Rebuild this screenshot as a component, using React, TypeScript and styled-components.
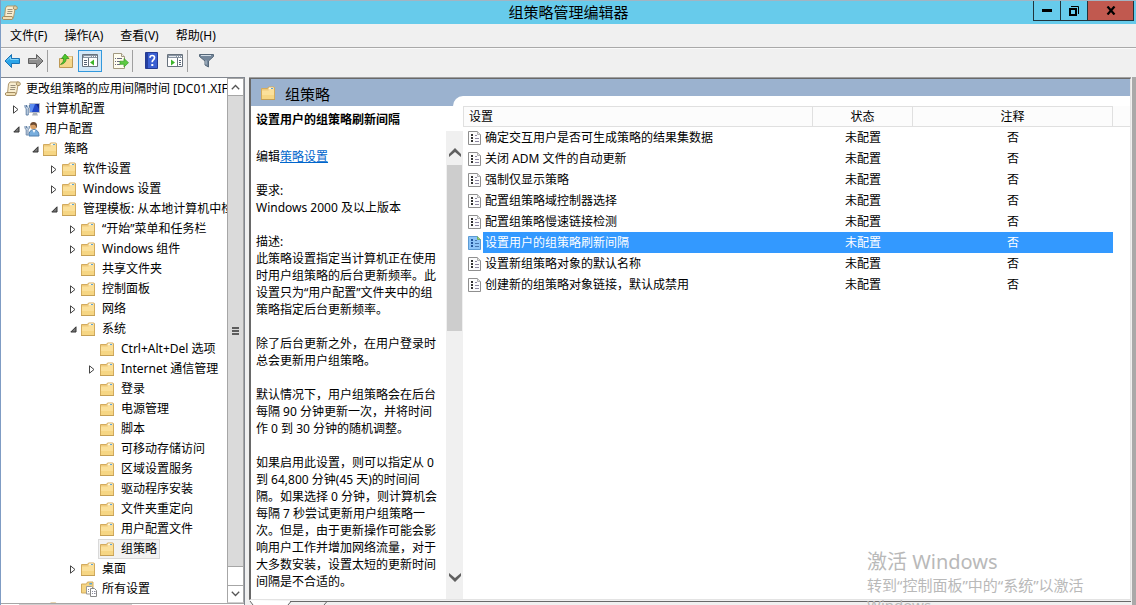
import React from "react";
import styled, { createGlobalStyle, css } from "styled-components";

const Global = createGlobalStyle`
  * { box-sizing: border-box; }
  body { margin: 0; overflow: hidden; }
  button { font: inherit; color: inherit; padding: 0; margin: 0; border: 0; background: none; }
  svg { display: block; flex: none; }
  p, h1, h2 { margin: 0; font-weight: normal; }
`;

const Window = styled.div`
  position: relative;
  display: flex;
  flex-direction: column;
  height: 100vh;
  overflow: hidden;
  border-left: 1px solid #7f9cc4;
  background: #f0f0f0;
  color: #000;
  font: 12px/20px "Noto Sans", "Noto Sans CJK SC", sans-serif;
`;

/* ---------- title bar ---------- */

const TitleBar = styled.header`
  flex: none;
  display: grid;
  grid-template-columns: 1fr auto 1fr;
  align-items: start;
  height: 24px;
  border-top: 1px solid #a3b4c2;
  background: #67cbeb;
`;

const TitleIcon = styled.div`
  padding: 4px 0 0 1px;
`;

const WindowTitle = styled.h1`
  font-size: 15px;
  line-height: 22px;
`;

const Captions = styled.div`
  display: flex;
  justify-content: flex-end;
  padding-right: 2px;
`;

const CaptionButton = styled.button<{ $close?: boolean }>`
  display: flex;
  align-items: center;
  justify-content: center;
  width: ${(p) => (p.$close ? 47 : 28)}px;
  height: 20px;
  border: 1px solid #20343c;
  border-top: 0;
  margin-left: -1px;
  background: ${(p) => (p.$close ? "#c1594f" : "transparent")};
`;

/* ---------- menu and toolbar ---------- */

const MenuBar = styled.nav`
  flex: none;
  display: flex;
  gap: 1px;
  height: 24px;
  padding-left: 1px;
  border-bottom: 1px solid #a9a9a9;
`;

const MenuItem = styled.button`
  padding: 0 8px;
  line-height: 22px;
`;

const Toolbar = styled.div`
  flex: none;
  display: flex;
  align-items: center;
  height: 29px;
  padding-bottom: 5px;
  border-top: 1px solid #fafafa;
`;

const ToolButton = styled.button<{ $on?: boolean }>`
  display: flex;
  align-items: center;
  justify-content: center;
  width: 24px;
  height: 22px;
  ${(p) =>
    p.$on &&
    css`
      border: 1px solid #3399dd;
      background: #d3e8f8;
    `}
`;

const ToolGroup = styled.div`
  display: flex;
  align-items: center;
  padding-left: 6px;
  & + & {
    border-left: 1px solid #a0a0a0;
  }
  &:first-child {
    padding-left: 0;
  }
  &:first-child ${ToolButton} {
    width: 23px;
  }
`;

const ToolGap = styled.span`
  width: 6px;
`;

/* ---------- body ---------- */

const Body = styled.main`
  flex: 1;
  min-height: 0;
  display: flex;
`;

const TreePane = styled.section`
  flex: none;
  display: flex;
  flex-direction: column;
  width: 244px;
  border-top: 1px solid #82878f;
  border-right: 1px solid #82878f;
  background: #fff;
`;

const TreeArea = styled.div`
  flex: 1;
  min-height: 0;
  display: flex;
`;

const TreeList = styled.ul`
  flex: 1;
  min-width: 0;
  margin: 0;
  padding: 1px 0 0;
  overflow: hidden;
  list-style: none;
`;

const TreeRow = styled.li<{ $level: number }>`
  display: flex;
  align-items: center;
  height: 20px;
  padding-left: ${(p) => (p.$level ? p.$level * 19 - 10 : 2)}px;
  white-space: nowrap;
`;

const Expander = styled.span`
  flex: none;
  display: flex;
  justify-content: center;
  width: 12px;
`;

const TreeLabel = styled.span<{ $selected?: boolean }>`
  display: flex;
  align-items: center;
  gap: 5px;
  height: 20px;
  padding: 0 2px 0 1px;
  line-height: 18px;
  border: 1px solid ${(p) => (p.$selected ? "#d9d9d9" : "transparent")};
  background: ${(p) => (p.$selected ? "#f2f2f2" : "transparent")};
`;

const IconBox = styled.span`
  flex: none;
  display: flex;
  width: 16px;
`;

const ScrollTrack = styled.div`
  flex: none;
  display: flex;
  flex-direction: column;
  width: 17px;
  border: 1px solid #a6a6a6;
  border-bottom-color: #cfcfcf;
`;

const ScrollButton = styled.button`
  flex: none;
  display: flex;
  align-items: center;
  justify-content: center;
  height: 17px;
  border-bottom: 1px solid #a6a6a6;
`;

const ScrollThumb = styled.div`
  flex: 1;
  display: flex;
  align-items: center;
  justify-content: center;
  margin-bottom: 18px;
  border-bottom: 1px solid #a6a6a6;
  background: #dadada;
`;

const LastScrollButton = styled(ScrollButton)`
  border-top: 1px solid #a6a6a6;
  border-bottom: 0;
`;

const HorizontalTrack = styled.div`
  flex: none;
  height: 2px;
  padding-left: 18px;
  border-top: 1px solid #a6a6a6;
`;

const HorizontalThumb = styled.div`
  width: 50%;
  height: 1px;
  background: #cdcdcd;
`;

const DetailPane = styled.section`
  flex: 1;
  min-width: 0;
  display: flex;
  flex-direction: column;
  margin-left: 4px;
  border-top: 1px solid #a0a0a0;
`;

const DetailFrame = styled.div`
  flex: 1;
  min-height: 0;
  display: flex;
  border: 1px solid #696969;
  border-left-width: 2px;
  border-right-color: #e3e3e3;
  border-bottom-color: #e3e3e3;
  background: #fff;
`;

const RightEdge = styled.div`
  flex: none;
  width: 4px;
  margin-left: 1px;
  background: #a9a9a9;
`;

const InfoColumn = styled.div`
  flex: none;
  display: flex;
  flex-direction: column;
  width: 212px;
`;

const Banner = styled.div`
  position: relative;
  flex: none;
  display: flex;
  align-items: center;
  gap: 10px;
  height: 27px;
  padding: 0 0 0 10px;
  background: #9bb2cf;
`;

const BannerCurve = styled.span`
  position: absolute;
  right: 0;
  bottom: 0;
  width: 10px;
  height: 10px;
  border-top-left-radius: 10px;
  background: #fff;
`;

const BannerTitle = styled.h2`
  font-size: 15px;
  line-height: 20px;
  padding-top: 2px;
`;

const PolicyName = styled.h2`
  flex: none;
  height: 25px;
  padding: 5px 0 0 5px;
  font-size: 12px;
  font-weight: bold;
  line-height: 17px;
`;

const InfoScroll = styled.div`
  flex: 1;
  min-height: 0;
  display: flex;
`;

const InfoText = styled.div`
  flex: 1;
  min-width: 0;
  display: flex;
  flex-direction: column;
  gap: 17px;
  padding: 17px 0 0 5px;
  line-height: 17px;
  white-space: pre;
  a {
    color: #0066cc;
  }
`;

const InfoTrack = styled.div`
  flex: none;
  width: 17px;
  display: flex;
  flex-direction: column;
  padding-bottom: 9px;
  background: #f0f0f0;
`;

const InfoArrow = styled.button`
  flex: none;
  display: flex;
  align-items: center;
  justify-content: center;
  height: 34px;
  padding-top: 8px;
`;

const InfoThumb = styled.div`
  flex: 166;
  margin: 0 1px 0 1px;
  background: #cdcdcd;
`;

const TrackSpace = styled.div`
  flex: 226;
`;

const ListColumn = styled.div`
  flex: 1;
  min-width: 0;
`;

const ListBand = styled.div`
  height: 17px;
  margin-bottom: 10px;
  background: #9bb2cf;
`;

const PolicyTable = styled.table`
  width: 100%;
  table-layout: fixed;
  border-collapse: separate;
  border-spacing: 0;
  line-height: 21px;
`;

const NameCol = styled.col``;
const StateCol = styled.col`
  width: 100px;
`;
const NoteCol = styled.col`
  width: 200px;
`;
const RestCol = styled.col`
  width: 17px;
`;

const HeadCell = styled.th<{ $left?: boolean; $rest?: boolean }>`
  height: 21px;
  padding: 0 0 0 ${(p) => (p.$left ? 5 : 0)}px;
  border: 1px solid #e0e0e0;
  border-left-width: ${(p) => (p.$left ? 1 : 0)}px;
  ${(p) => p.$rest && "border-top-color: transparent; border-right: 0;"}
  background: #fcfcfc;
  font-weight: normal;
  line-height: 19px;
  text-align: ${(p) => (p.$left ? "left" : "center")};
`;

const Cell = styled.td<{ $selected: boolean }>`
  height: 21px;
  padding: 0;
  text-align: center;
  background: ${(p) => (p.$selected ? "#3399ff" : "transparent")};
  color: ${(p) => (p.$selected ? "#fff" : "#000")};
`;

const NameCell = styled.td`
  height: 21px;
  padding: 0;
`;

const NameInner = styled.div`
  display: flex;
  align-items: center;
  padding-left: 5px;
`;

const PolicyLabel = styled.span<{ $selected: boolean }>`
  flex: 1;
  height: 21px;
  padding-left: 2px;
  margin-left: 1px;
  line-height: 22px;
  background: ${(p) => (p.$selected ? "#3399ff" : "transparent")};
  color: ${(p) => (p.$selected ? "#fff" : "#000")};
`;

const TabStrip = styled.div`
  flex: none;
  height: 5px;
  overflow: hidden;
`;

const Watermark = styled.div`
  position: absolute;
  right: 49px;
  bottom: -10px;
  width: 220px;
  color: #b9b9b9;
  font-size: 15px;
  line-height: 20px;
  white-space: nowrap;
  pointer-events: none;
`;

const WatermarkTitle = styled.p`
  font-size: 20px;
  line-height: 26px;
`;

/* ---------- icons ---------- */

const Scroll = () => (
  <svg width="16" height="16" viewBox="0 0 16 16">
    <path d="M5 1h8.500l-2 11.500H2.500L3.500 3z" fill="#f8edcf" stroke="#b09a70" />
    <path d="M12.500 1c-1.500 0-1.500 3.500 0 3.500h1.700c1.500 0 1.500-3.500-.5-3.500z" fill="#e2cfa2" stroke="#a48d62" />
    <path d="M1.500 11.500h8.500c1.200 0 1.200 3 0 3h-8.500c-1.500 0-1.500-3 0-3z" fill="#f0dfb5" stroke="#a48d62" />
    <path d="M5.500 4.500h5M5.500 6.500h5M5 8.500h5" stroke="#9a907c" />
  </svg>
);

const Folder = () => (
  <svg width="14" height="16" viewBox="0 0 14 16">
    <path d="M.5 3.500h6l1-1.500h5q1 0 1 1v11.500H.5z" fill="#efca7c" stroke="#d2ab5e" />
    <path d="M8 2.500h4.500v2H7.500z" fill="#fff8df" />
    <path d="M10 3h2v1h-2z" fill="#59a5d8" />
    <path d="M1 5.500h6.500l1-1H13V14H1z" fill="#fbe09a" />
    <path d="M1 10h12v4H1z" fill="#f6d684" />
    <path d="M0 14.500h14" stroke="#c5a056" />
  </svg>
);

const Computer = () => (
  <svg width="16" height="16" viewBox="0 0 16 16">
    <path d="M5.500 2.500h10v9h-10z" fill="#2147c9" stroke="#b9bec9" />
    <path d="M6 3h5l-3 8H6z" fill="#5d8df0" />
    <path d="M12 3h3v5z" fill="#12288f" />
    <path d="M9 12h4l1 2.500H8z" fill="#aab0b8" />
    <path d="M1 4v2.500l1.200 1V14h2V7.500l1.300-1V4M2.500 4v2h1.500" fill="#dfe9f3" stroke="#5b7ba3" />
  </svg>
);

const Person = () => (
  <svg width="16" height="16" viewBox="0 0 16 16">
    <path d="M5 15q-.5-6 5-6.500Q15 9 15 15z" fill="#78aede" stroke="#4f7fae" />
    <path d="M8.500 9h3L10 12z" fill="#fff" />
    <circle cx="9.500" cy="5" r="3.300" fill="#d9a066" />
    <path d="M6.300 4.500Q6 1 9.500 1T13 5l-.5 2.500Q12 4 10 3.800T6.300 4.500z" fill="#6d4b31" />
    <path d="M1 5v2.500l1.200 1V14h1.800V8.500l1.300-1V5M2.500 5v2H4" fill="#dfe9f3" stroke="#6a86a8" />
  </svg>
);

const AllSettings = () => (
  <svg width="17" height="16" viewBox="0 0 17 16">
    <path d="M.5 3h5l1-2h5.500v11H.5z" fill="#f5d584" stroke="#d2ab5e" />
    <path d="M8.500 2h2.500v1.500H8z" fill="#59a5d8" />
    <path d="M5.500 5.500h5l1.500 1.500v6H5.500z" fill="#fff" stroke="#999" />
    <path d="M9.500 7.500h4l2 2v6h-6z" fill="#fff" stroke="#888" />
    <path d="M11 10.500h1m1 0h1.500M11 12.500h1m1 0h1.500M7 8.500h1M7 10.500h1" stroke="#8a8a9c" />
  </svg>
);

const Closed = () => (
  <svg width="6" height="9" viewBox="0 0 6 9">
    <path d="M.5.8v7.400L5 4.500z" fill="#fff" stroke="#444" />
  </svg>
);

const Open = () => (
  <svg width="7" height="7" viewBox="0 0 7 7">
    <path d="M6 .8V6H.8z" fill="#777" stroke="#333" />
  </svg>
);

const PolicyIcon = ({ active }: { active: boolean }) => (
  <svg width="14" height="16" viewBox="0 0 14 16">
    <path d="M.5 1.500h9l3 3v10H.5z" fill={active ? "#8cc4f8" : "#fcfcfc"} stroke={active ? "#5b9bd5" : "#8f8f8f"} />
    <path d="M9.500 1.500v3h3" fill={active ? "#b4d957" : "#e2e2e2"} stroke={active ? "#6fae6d" : "#b1b1b1"} />
    <path d="M3 4h2v2H3zM3 7h2v2H3zM3 10h2v2H3z" fill={active ? "#22569b" : "#333"} />
    <path d="M7 5.500h2M7 8.500h4M7 11.500h4" stroke={active ? "#4777b0" : "#8c86a0"} />
  </svg>
);

const Arrow = ({ forward }: { forward?: boolean }) => (
  <svg width="17" height="16" viewBox="0 0 17 16">
    <path
      d={forward ? "M16 8 9.500 1.500v4h-8v5h8v4z" : "M1 8l6.500-6.500v4h8v5h-8v4z"}
      fill={forward ? "#8e8e8e" : "#2ca5e8"}
      stroke={forward ? "#606060" : "#1973b5"}
    />
    <path d={forward ? "M2.500 6.500h8V4l3.500 3.500" : "M3 7.500 6.500 4v2.500h8"} fill="none" stroke={forward ? "#b8b8b8" : "#83d5fa"} />
  </svg>
);

const UpFolder = () => (
  <svg width="16" height="16" viewBox="0 0 16 16">
    <path d="M1.500 5.500h6l1.500-2h5.500v11h-13z" fill="#f4d68b" stroke="#bd9954" />
    <path d="M10 3.500h4V6H9z" fill="#ffe9af" />
    <path d="M2.500 11.500Q8 10.500 8.200 5.500H11L7 1 3.500 5.500h2.200Q6 9 2.500 11.500z" fill="#4fc92b" stroke="#29871a" strokeWidth=".7" />
  </svg>
);

const Panel = ({ right }: { right?: boolean }) => (
  <svg width="17" height="15" viewBox="0 0 17 15">
    <path d="M.5 1.500h15v12H.5z" fill="#fff" stroke="#68727d" />
    <path d="M1 2h14v3H1z" fill="#8995a3" />
    <path d="M2 3.500h7" stroke="#e4e9ee" />
    <path d="M10 3.500h1m1 0h1m1 0h1" stroke="#fff" />
    <path d={right ? "M10.500 5v8" : "M6.500 5v8"} stroke="#68727d" />
    <path d={right ? "M12 7.500h2M12 9.500h2M12 11.500h2" : "M2 7.500h3M2 9.500h3M2 11.500h3"} stroke="#566273" />
    <path d={right ? "M4 6.500v6L8 9.500z" : "M12 6.500v6L8 9.500z"} fill="#3db52b" />
  </svg>
);

const ExportIcon = () => (
  <svg width="17" height="16" viewBox="0 0 17 16">
    <path d="M1.500.5h8l3 3v12h-11z" fill="#fffdf0" stroke="#a39a80" />
    <path d="M9.500.5v3h3" fill="#eee" stroke="#a39a80" />
    <path d="M3 5.500h1m1 0h5M3 8.500h1m1 0h3M3 11.500h1m1 0h3" stroke="#69697f" />
    <path d="M8 8.200h4V5.500L16.500 9.700 12 14v-2.700H8z" fill="#5dca43" stroke="#369b24" strokeWidth=".7" />
  </svg>
);

const Help = () => (
  <svg width="13" height="17" viewBox="0 0 13 17">
    <path d="M.5.5h12v16H.5z" fill="#3a5fd2" stroke="#243a93" />
    <path d="M1 1h2v15H1z" fill="#243f9f" />
    <path d="M5 5.800Q5 3.500 7.300 3.500T9.500 5.600Q9.500 7 8.200 8 7.200 8.700 7.200 10.300" fill="none" stroke="#fff" strokeWidth="1.700" />
    <path d="M6.300 12h2v2h-2z" fill="#fff" />
  </svg>
);

const Filter = () => (
  <svg width="17" height="17" viewBox="0 0 17 17">
    <path d="M1.500 2.500h14v2L10.500 9v6L7 13V9L1.500 4.500z" fill="#74879b" stroke="#566879" />
    <path d="M3 3.500h10" stroke="#d3dde6" />
    <path d="M8 8.500v4" stroke="#b9c8d6" />
  </svg>
);

const ThinChevron = ({ down }: { down?: boolean }) => (
  <svg width="9" height="6" viewBox="0 0 9 6">
    <path d={down ? "M.8.8l3.700 3.700L8.200.8" : "M.8 5.200l3.700-3.700 3.700 3.700"} fill="none" stroke="#555" strokeWidth="1.300" />
  </svg>
);

const BoldChevron = ({ down }: { down?: boolean }) => (
  <svg width="12" height="9" viewBox="0 0 12 9">
    <path d={down ? "M0 0v3l6 6 6-6V0L6 5z" : "M0 9V6l6-6 6 6v3L6 4z"} fill="#606060" />
  </svg>
);

/* ---------- data ---------- */

type IconName = "scroll" | "computer" | "person" | "folder" | "all";
type Node = { level: number; label: string; icon?: IconName; state?: "open" | "closed"; selected?: boolean };

const icons: Record<IconName, React.FC> = {
  scroll: Scroll,
  computer: Computer,
  person: Person,
  folder: Folder,
  all: AllSettings,
};

const nodes: Node[] = [
  { level: 0, label: "更改组策略的应用间隔时间 [DC01.XIF", icon: "scroll" },
  { level: 1, label: "计算机配置", icon: "computer", state: "closed" },
  { level: 1, label: "用户配置", icon: "person", state: "open" },
  { level: 2, label: "策略", state: "open" },
  { level: 3, label: "软件设置", state: "closed" },
  { level: 3, label: "Windows 设置", state: "closed" },
  { level: 3, label: "管理模板: 从本地计算机中检", state: "open" },
  { level: 4, label: "“开始”菜单和任务栏", state: "closed" },
  { level: 4, label: "Windows 组件", state: "closed" },
  { level: 4, label: "共享文件夹" },
  { level: 4, label: "控制面板", state: "closed" },
  { level: 4, label: "网络", state: "closed" },
  { level: 4, label: "系统", state: "open" },
  { level: 5, label: "Ctrl+Alt+Del 选项" },
  { level: 5, label: "Internet 通信管理", state: "closed" },
  { level: 5, label: "登录" },
  { level: 5, label: "电源管理" },
  { level: 5, label: "脚本" },
  { level: 5, label: "可移动存储访问" },
  { level: 5, label: "区域设置服务" },
  { level: 5, label: "驱动程序安装" },
  { level: 5, label: "文件夹重定向" },
  { level: 5, label: "用户配置文件" },
  { level: 5, label: "组策略", selected: true },
  { level: 4, label: "桌面", state: "closed" },
  { level: 4, label: "所有设置", icon: "all" },
  { level: 2, label: "" },
];

const policies = [
  "确定交互用户是否可生成策略的结果集数据",
  "关闭 ADM 文件的自动更新",
  "强制仅显示策略",
  "配置组策略域控制器选择",
  "配置组策略慢速链接检测",
  "设置用户的组策略刷新间隔",
  "设置新组策略对象的默认名称",
  "创建新的组策略对象链接，默认成禁用",
];

const selectedPolicy = 5;

const paragraphs = [
  "要求:\nWindows 2000 及以上版本",
  "描述:\n此策略设置指定当计算机正在使用\n时用户组策略的后台更新频率。此\n设置只为“用户配置”文件夹中的组\n策略指定后台更新频率。",
  "除了后台更新之外，在用户登录时\n总会更新用户组策略。",
  "默认情况下，用户组策略会在后台\n每隔 90 分钟更新一次，并将时间\n作 0 到 30 分钟的随机调整。",
  "如果启用此设置，则可以指定从 0\n到 64,800 分钟(45 天)的时间间\n隔。如果选择 0 分钟，则计算机会\n每隔 7 秒尝试更新用户组策略一\n次。但是，由于更新操作可能会影\n响用户工作并增加网络流量，对于\n大多数安装，设置太短的更新时间\n间隔是不合适的。",
];

const TreeItem = ({ node }: { node: Node }) => {
  const Icon = icons[node.icon ?? "folder"];
  return (
    <TreeRow $level={node.level}>
      {node.level > 0 && (
        <Expander>
          {node.state === "open" && <Open />}
          {node.state === "closed" && <Closed />}
        </Expander>
      )}
      <TreeLabel $selected={node.selected}>
        <IconBox>
          <Icon />
        </IconBox>
        {node.label}
      </TreeLabel>
    </TreeRow>
  );
};

export default function App() {
  return (
    <>
      <Global />
      <Window lang="zh-CN">
        <TitleBar>
          <TitleIcon>
            <Scroll />
          </TitleIcon>
          <WindowTitle>组策略管理编辑器</WindowTitle>
          <Captions>
            <CaptionButton aria-label="最小化">
              <svg width="10" height="3" viewBox="0 0 10 3"><path d="M0 0h10v3H0z" /></svg>
            </CaptionButton>
            <CaptionButton aria-label="还原">
              <svg width="10" height="10" viewBox="0 0 10 10">
                <path d="M1 3h6v6H1z" fill="none" stroke="#000" strokeWidth="2" />
                <path d="M2 .5h7.500V8" fill="none" stroke="#000" />
              </svg>
            </CaptionButton>
            <CaptionButton $close aria-label="关闭">
              <svg width="10" height="9" viewBox="0 0 10 9">
                <path d="M1.500.5l7 8m0-8l-7 8" stroke="#000" strokeWidth="2.200" />
              </svg>
            </CaptionButton>
          </Captions>
        </TitleBar>

        <MenuBar>
          {["文件(F)", "操作(A)", "查看(V)", "帮助(H)"].map((m) => (
            <MenuItem key={m}>{m}</MenuItem>
          ))}
        </MenuBar>

        <Toolbar>
          <ToolGroup>
            <ToolButton aria-label="后退"><Arrow /></ToolButton>
            <ToolButton aria-label="前进"><Arrow forward /></ToolButton>
          </ToolGroup>
          <ToolGroup>
            <ToolButton aria-label="向上"><UpFolder /></ToolButton>
            <ToolButton $on aria-label="显示控制台树"><Panel /></ToolButton>
            <ToolGap />
            <ToolButton aria-label="导出列表"><ExportIcon /></ToolButton>
          </ToolGroup>
          <ToolGroup>
            <ToolButton aria-label="帮助"><Help /></ToolButton>
            <ToolButton aria-label="显示操作窗格"><Panel right /></ToolButton>
          </ToolGroup>
          <ToolGroup>
            <ToolButton aria-label="筛选器"><Filter /></ToolButton>
          </ToolGroup>
        </Toolbar>

        <Body>
          <TreePane>
            <TreeArea>
              <TreeList>
                {nodes.map((n) => (
                  <TreeItem key={n.label} node={n} />
                ))}
              </TreeList>
              <ScrollTrack>
                <ScrollButton aria-label="向上滚动"><ThinChevron /></ScrollButton>
                <ScrollThumb>
                  <svg width="7" height="8" viewBox="0 0 7 8">
                    <path d="M0 1h7M0 4h7M0 7h7" stroke="#5c5c5c" strokeWidth="2" />
                  </svg>
                </ScrollThumb>
                <LastScrollButton aria-label="向下滚动"><ThinChevron down /></LastScrollButton>
              </ScrollTrack>
            </TreeArea>
            <HorizontalTrack>
              <HorizontalThumb />
            </HorizontalTrack>
          </TreePane>

          <DetailPane>
            <DetailFrame>
              <InfoColumn>
                <Banner>
                  <Folder />
                  <BannerTitle>组策略</BannerTitle>
                  <BannerCurve />
                </Banner>
                <PolicyName>设置用户的组策略刷新间隔</PolicyName>
                <InfoScroll>
                  <InfoText>
                    <p>编辑<a href="#policy">策略设置</a></p>
                    {paragraphs.map((p) => (
                      <p key={p}>{p}</p>
                    ))}
                  </InfoText>
                  <InfoTrack>
                    <InfoArrow aria-label="向上滚动"><BoldChevron /></InfoArrow>
                    <InfoThumb />
                    <TrackSpace />
                    <InfoArrow aria-label="向下滚动"><BoldChevron down /></InfoArrow>
                  </InfoTrack>
                </InfoScroll>
              </InfoColumn>
              <ListColumn>
                <ListBand />
                <PolicyTable>
                  <colgroup>
                    <NameCol />
                    <StateCol />
                    <NoteCol />
                    <RestCol />
                  </colgroup>
                  <thead>
                    <tr>
                      <HeadCell $left>设置</HeadCell>
                      <HeadCell>状态</HeadCell>
                      <HeadCell>注释</HeadCell>
                      <HeadCell as="td" $rest />
                    </tr>
                  </thead>
                  <tbody>
                    {policies.map((name, i) => {
                      const on = i === selectedPolicy;
                      return (
                        <tr key={name}>
                          <NameCell>
                            <NameInner>
                              <PolicyIcon active={on} />
                              <PolicyLabel $selected={on}>{name}</PolicyLabel>
                            </NameInner>
                          </NameCell>
                          <Cell $selected={on}>未配置</Cell>
                          <Cell $selected={on}>否</Cell>
                          <Cell $selected={false} />
                        </tr>
                      );
                    })}
                  </tbody>
                </PolicyTable>
              </ListColumn>
            </DetailFrame>
            <TabStrip>
              <svg width="100%" height="5">
                <path d="M1 0l3 5h34l3-4z" fill="#fff" />
                <path d="M41 1.500h2000M1 1l3 4M42 1.500L39 5M78 1.500L75 5" fill="none" stroke="#696969" />
              </svg>
            </TabStrip>
          </DetailPane>
          <RightEdge />
        </Body>

        <Watermark>
          <WatermarkTitle>激活 Windows</WatermarkTitle>
          <p>转到“控制面板”中的“系统”以激活</p>
          <p>Windows</p>
        </Watermark>
      </Window>
    </>
  );
}
